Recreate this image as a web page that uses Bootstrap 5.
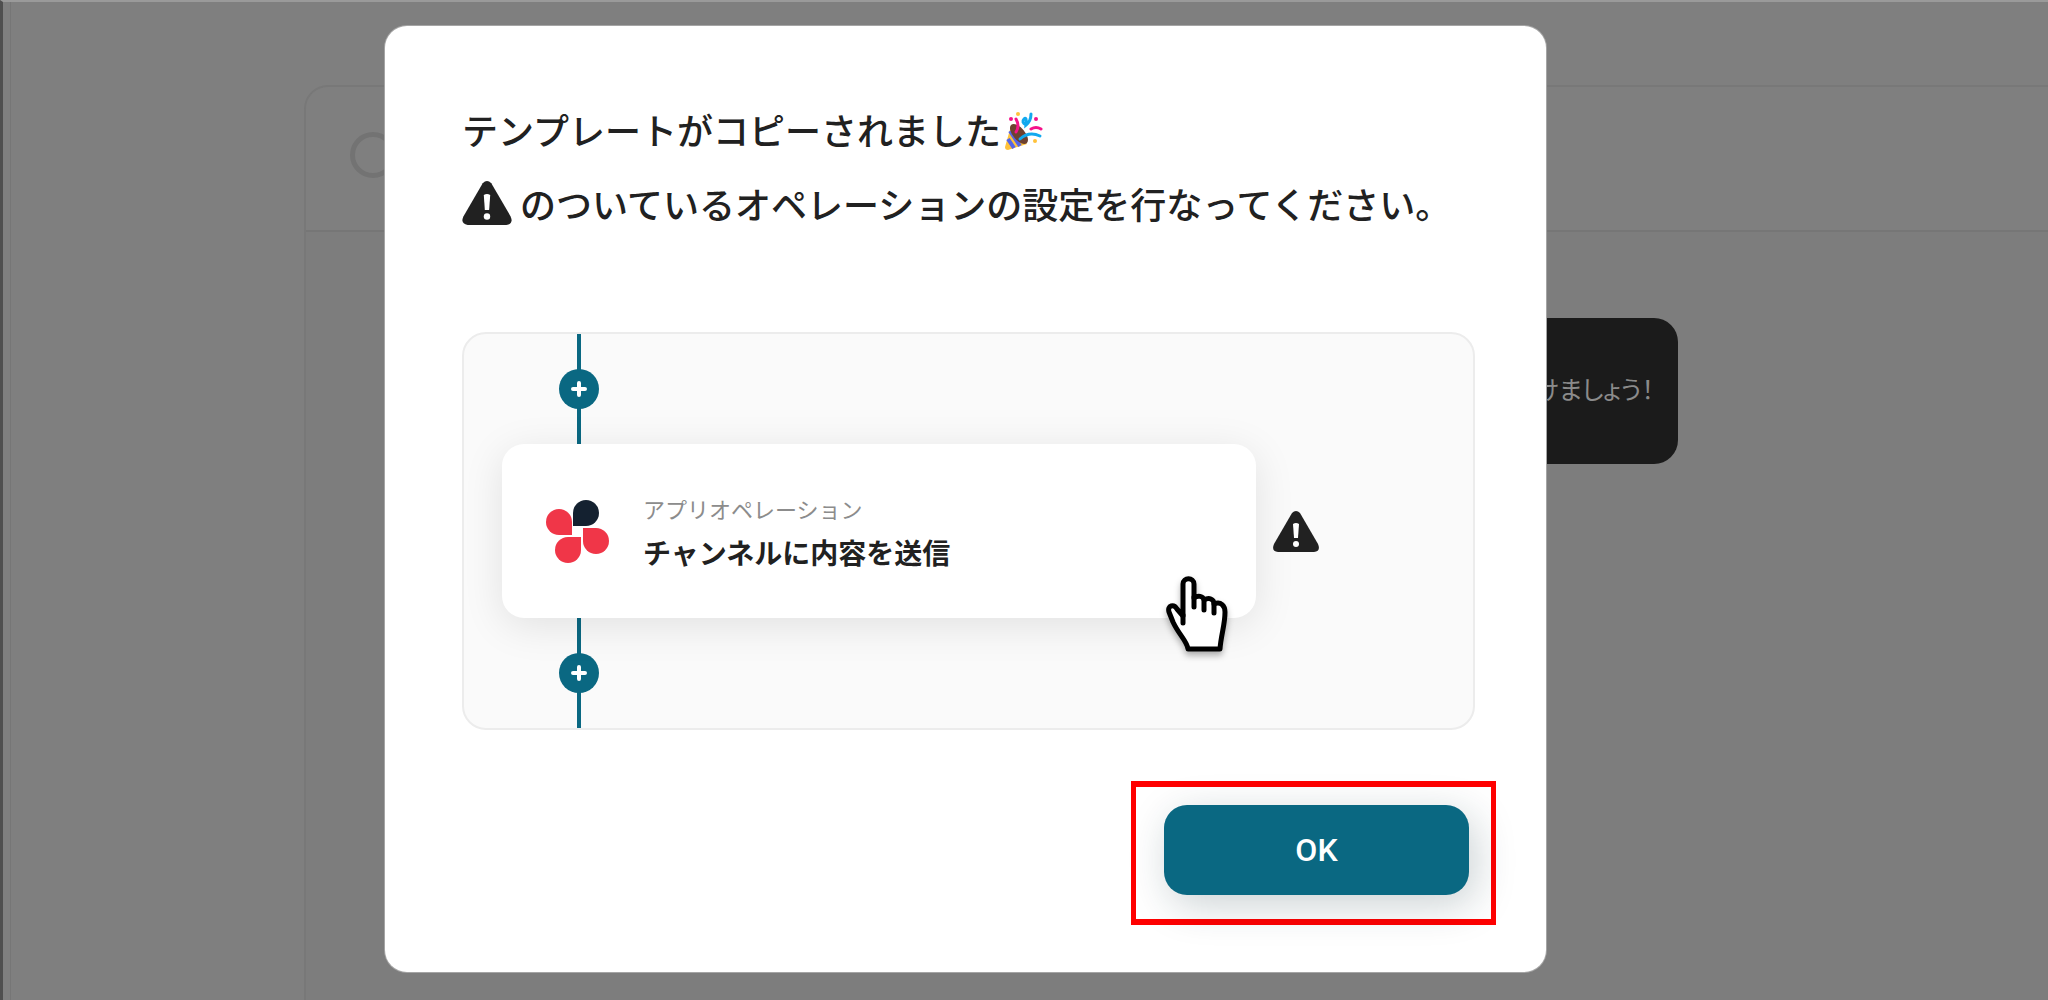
<!DOCTYPE html>
<html lang="ja">
<head>
<meta charset="utf-8">
<meta name="viewport" content="width=device-width, initial-scale=1">
<title>テンプレート</title>
<link href="https://cdn.jsdelivr.net/npm/bootstrap@5.3.0/dist/css/bootstrap.min.css" rel="stylesheet">
<script src="https://cdn.jsdelivr.net/npm/bootstrap@5.3.0/dist/js/bootstrap.bundle.min.js"></script>
<style>
  :root { --teal: #0a6882; --ink: #212121; }
  body { font-family: "Noto Sans CJK JP", sans-serif; color: var(--ink); background: #7f7f7f; }
  .stage { min-height: 100vh; border-top: 2px solid #9a9a9a; border-left: 3px solid #4f4f4f; }
  .backdrop-page { inset: 0 0 0 7px; padding: 83px 0 0 293px; border-left: 1px solid #767676; }
  .flow-panel { border: 2px solid #787878; border-width: 2px 0 0 2px; border-top-left-radius: 24px; background: #7d7d7d; }
  .flow-head { height: 145px; padding: 0 0 8px 44px; border-bottom: 2px solid #767676; background: #7f7f7f; border-top-left-radius: 22px; }
  .ring { width: 46px; height: 46px; border: 5px solid #737373; }
  .hint-row { padding: 86px 370px 0 300px; }
  .hint { height: 146px; padding: 0 24px 4px 0; border-radius: 24px; background: #1b1b1b; color: #8b8b8b; font-size: 25px; font-feature-settings: "palt"; }
  .dialog-area { padding: 24px 502px 28px 382px; min-height: 998px; }
  .dialog-box { border-radius: 22px; padding: 66px 71px 45px 77px; box-shadow: 0 0 0 1px #a5a5a5; }
  .dialog-title { font-size: 36px; font-weight: 500; line-height: 74px; }
  .diagram { margin-top: 92px; border: 2px solid #ececec; border-radius: 24px; background: #fafafa; padding: 0 38px; }
  .connector { width: 40px; height: 110px; margin-left: 57px; background: linear-gradient(var(--teal), var(--teal)) center / 4px 100% no-repeat; }
  .plus { width: 40px; height: 40px; background: var(--teal); border: 0; }
  .op-row { gap: 17px; }
  .op-card { width: 754px; height: 174px; border-radius: 22px; padding-left: 44px; gap: 34px; box-shadow: 0 8px 40px rgba(0,0,0,.1); }
  .op-kind { font-size: 22px; line-height: 32px; padding-top: 10px; color: #8c8c8c; }
  .op-name { font-size: 28px; line-height: 56px; font-weight: 700; }
  .pointer { right: 26px; bottom: -35px; filter: drop-shadow(0 4px 3px rgba(0,0,0,.3)); }
  .callout { border: solid #f00; border-width: 6px 5px; margin: 51px -21px 0 0; padding: 18px 22px 24px 28px; }
  .ok-btn, .ok-btn:hover { width: 305px; height: 90px; border: 0; border-radius: 23px; background: var(--teal); color: #fff; font-family: Roboto, sans-serif; font-size: 32px; font-weight: 500; box-shadow: 6px 10px 40px rgba(20,50,60,.22); }
</style>
</head>
<body>
<main class="stage position-relative overflow-hidden">
  <div class="backdrop-page position-absolute" aria-hidden="true">
    <section class="flow-panel h-100">
      <header class="flow-head d-flex align-items-center"><span class="ring rounded-circle"></span></header>
      <div class="hint-row"><div class="hint d-flex align-items-center justify-content-end">けましょう！</div></div>
    </section>
  </div>

  <div class="dialog-area position-relative d-flex">
    <div class="dialog-box bg-white flex-fill d-flex flex-column" role="dialog" aria-labelledby="dlg-title">
      <h1 class="dialog-title mb-0" id="dlg-title">
        <span class="d-flex align-items-center">テンプレートがコピーされました
          <svg class="ms-1 mt-1" width="38" height="38" viewBox="0 0 38 38" fill="none" stroke-linecap="round">
            <path d="M6 14 0 35Q0 38 3 38L22 32Z" fill="#ffc23b"/>
            <path d="M5 19 15 34M3 27 9 36" stroke="#5565e8" stroke-width="4" stroke-linecap="butt"/>
            <ellipse cx="14" cy="22" rx="6" ry="12" transform="rotate(-40 14 22)" fill="#6d4130"/>
            <path d="M11 7Q15 14 11 20" stroke="#f5128a" stroke-width="3"/>
            <path d="M26 17Q31 14 36 17" stroke="#f5128a" stroke-width="3"/>
            <path d="M15 27Q24 19 35 24M21 13Q16 10 19 7T21 13Q26 9 26 2" stroke="#12a9ef" stroke-width="3"/>
            <g fill="#f5128a"><circle cx="6" cy="7" r="2"/><circle cx="31" cy="7" r="2"/></g>
            <g fill="#ffc23b"><circle cx="13" cy="2" r="2"/><circle cx="30" cy="29" r="2"/></g>
          </svg>
        </span>
        <span class="d-flex align-items-center">
          <svg class="me-2" width="50" height="44" viewBox="0 0 46 41"><path d="M19 2Q23-2 27 2L45 33Q48 40 41 41H5Q-2 40 1 33Z" fill="#212121"/><path d="M20 13Q23 11 26 13L25 27H21Z" fill="#fff"/><circle cx="23" cy="33" r="3" fill="#fff"/></svg>
          のついているオペレーションの設定を行なってください。
        </span>
      </h1>

      <div class="diagram">
        <div class="connector d-flex align-items-center">
          <button type="button" class="plus rounded-circle p-0 d-flex align-items-center justify-content-center" aria-label="追加"><svg width="16" height="16" viewBox="0 0 16 16" stroke="#fff" stroke-width="4" stroke-linecap="round"><path d="M8 2V14M2 8H14"/></svg></button>
        </div>
        <div class="op-row d-flex align-items-center">
          <div class="op-card bg-white position-relative d-flex align-items-center">
            <svg width="63" height="63" viewBox="0 0 63 63" fill="#f03648">
              <path d="M27 26V13A13 13 0 1 1 40 26Z" fill="#142130"/>
              <path d="M26 35H13A13 13 0 1 1 26 22Z"/>
              <path d="M35 37V50A13 13 0 1 1 22 37Z"/>
              <path d="M37 28H50A13 13 0 1 1 37 41Z"/>
            </svg>
            <div><div class="op-kind">アプリオペレーション</div><div class="op-name">チャンネルに内容を送信</div></div>
            <svg class="pointer position-absolute" width="66" height="78" viewBox="0 0 66 78" fill="#fff" stroke="#000" stroke-width="5" stroke-linecap="round" stroke-linejoin="round">
              <path d="M24 74C23 66 15 60 9 47L5 37C3 30 10 29 13 34L19 41V9C19 2 30 2 30 9V23C34 20 39 21 40 25C45 22 50 24 50 29C57 26 61 31 61 37C61 50 57 60 56 74Z"/><path d="M19 40V48M30 22V32M40 26V35M50 29V38"/>
            </svg>
          </div>
          <svg width="46" height="41" viewBox="0 0 46 41"><path d="M19 2Q23-2 27 2L45 33Q48 40 41 41H5Q-2 40 1 33Z" fill="#212121"/><path d="M20 13Q23 11 26 13L25 27H21Z" fill="#fff"/><circle cx="23" cy="33" r="3" fill="#fff"/></svg>
        </div>
        <div class="connector d-flex align-items-center">
          <button type="button" class="plus rounded-circle p-0 d-flex align-items-center justify-content-center" aria-label="追加"><svg width="16" height="16" viewBox="0 0 16 16" stroke="#fff" stroke-width="4" stroke-linecap="round"><path d="M8 2V14M2 8H14"/></svg></button>
        </div>
      </div>

      <div class="callout align-self-end"><button type="button" class="btn ok-btn">OK</button></div>
    </div>
  </div>
</main>
</body>
</html>
